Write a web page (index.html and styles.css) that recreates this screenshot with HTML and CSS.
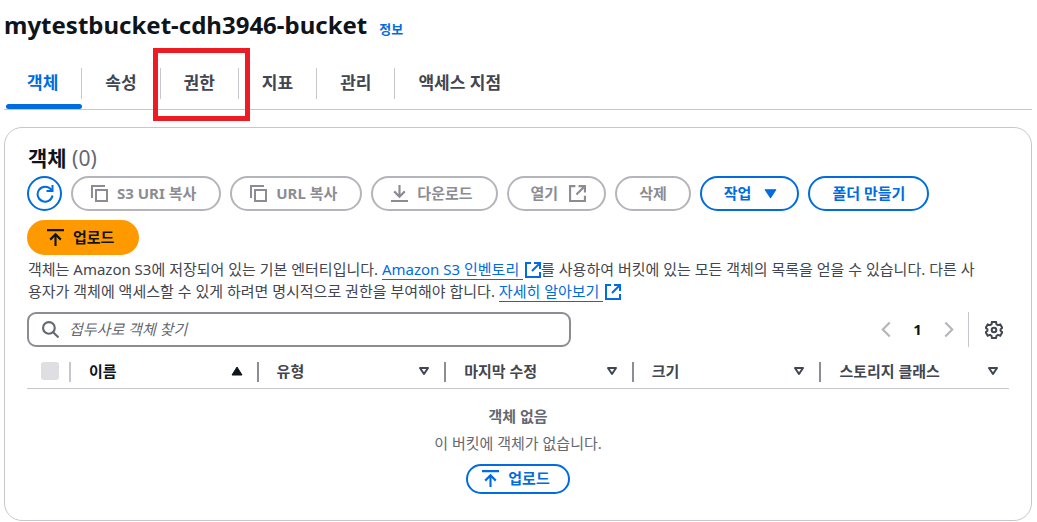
FILE: index.html
```html
<!DOCTYPE html>
<html lang="ko">
<head>
<meta charset="utf-8">
<title>mytestbucket-cdh3946-bucket</title>
<link rel="stylesheet" href="styles.css">
</head>
<body>
<svg class="defs" aria-hidden="true">
  <symbol id="copy" viewBox="0 0 17 17"><path d="M1 13V1h13M5 5h11v11H5z"/></symbol>
  <symbol id="upload" viewBox="0 0 16 16"><path d="M0 1h16M8 16V5.500M3 10l5-5 5 5"/></symbol>
  <symbol id="download" viewBox="0 0 16 16"><path d="M0 15h16M8 0v10.500M3 6l5 5 5-5"/></symbol>
  <symbol id="external" viewBox="0 0 16 16"><path d="M6 1H1v14h14v-5M9 1h6v6M15 1L7 9"/></symbol>
</svg>
<main class="page">
  <header class="title-row">
    <h1 class="title">mytestbucket-cdh3946-bucket</h1>
    <a class="info" href="#">정보</a>
  </header>
  <nav class="tabs">
    <button class="tab tab-active" type="button">객체</button>
    <button class="tab" type="button">속성</button>
    <button class="tab tab-marked" type="button">권한</button>
    <button class="tab" type="button">지표</button>
    <button class="tab" type="button">관리</button>
    <button class="tab" type="button">액세스 지점</button>
  </nav>
  <section class="panel">
    <h2 class="panel-title">객체 <span class="count">(0)</span></h2>
    <div class="actions">
      <button class="btn btn-round" type="button" aria-label="새로 고침"><svg class="icon icon-large" viewBox="0 0 18 18"><path d="M16.500 10.500a7.500 7.500 0 1 1-1.500-6l1.500 1.500M16.500 0v6h-6"/></svg></button>
      <button class="btn" type="button" disabled><svg class="icon"><use href="#copy"/></svg>S3 URI 복사</button>
      <button class="btn" type="button" disabled><svg class="icon"><use href="#copy"/></svg>URL 복사</button>
      <button class="btn" type="button" disabled><svg class="icon"><use href="#download"/></svg>다운로드</button>
      <button class="btn btn-trailing" type="button" disabled>열기<svg class="icon"><use href="#external"/></svg></button>
      <button class="btn btn-text" type="button" disabled>삭제</button>
      <button class="btn btn-trailing" type="button">작업<svg class="icon" viewBox="0 0 16 16"><path class="solid" d="M3 4.500h10L8 12z"/></svg></button>
      <button class="btn btn-text" type="button">폴더 만들기</button>
      <button class="btn btn-primary" type="button"><svg class="icon"><use href="#upload"/></svg>업로드</button>
    </div>
    <p class="description">객체는 Amazon S3에 저장되어 있는 기본 엔터티입니다. <a class="link" href="#"><span class="link-text">Amazon S3 인벤토리 </span><svg class="icon"><use href="#external"/></svg></a>를 사용하여 버킷에 있는 모든 객체의 목록을 얻을 수 있습니다. 다른 사용자가 객체에 액세스할 수 있게 하려면 명시적으로 권한을 부여해야 합니다. <a class="link" href="#"><span class="link-text">자세히 알아보기 </span><svg class="icon"><use href="#external"/></svg></a></p>
    <div class="tools">
      <label class="search">
        <svg class="icon" viewBox="0 0 16 16"><circle cx="6.500" cy="6.500" r="5.500"/><path d="M10.500 10.500l5 5"/></svg>
        <input class="search-input" type="text" placeholder="접두사로 객체 찾기" aria-label="접두사로 객체 찾기">
      </label>
      <div class="pager">
        <button class="page-step" type="button" aria-label="이전"><svg class="icon" viewBox="0 0 16 16"><path d="M12 1.500L5.500 8l6.500 6.500"/></svg></button>
        <button class="page-number" type="button">1</button>
        <button class="page-step" type="button" aria-label="다음"><svg class="icon" viewBox="0 0 16 16"><path d="M5 1.500L11.500 8 5 14.500"/></svg></button>
        <button class="settings" type="button" aria-label="기본 설정"><svg class="icon icon-large" viewBox="0 0 18 18"><path d="M7 1h4l.5 2.300 1.500.9 2.300-.8 2 3.500L15.600 8.300v1.400l1.700 1.500-2 3.500-2.300-.8-1.500.9L11 17H7l-.5-2.200-1.500-.9-2.300.8-2-3.500 1.700-1.500V8.300L.7 6.900l2-3.500 2.300.8 1.500-.9z"/><circle cx="9" cy="9" r="2.300"/></svg></button>
      </div>
    </div>
    <table class="table">
      <thead>
        <tr>
          <th class="select-cell"><input class="check" type="checkbox" aria-label="모두 선택" disabled></th>
          <th><span class="head head-sorted">이름<svg class="sort" viewBox="0 0 12 10"><path class="solid" d="M1 9L6 1l5 8z"/></svg></span></th>
          <th><span class="head">유형<svg class="sort" viewBox="0 0 12 10"><path d="M2 2h8L6 8z"/></svg></span></th>
          <th><span class="head">마지막 수정<svg class="sort" viewBox="0 0 12 10"><path d="M2 2h8L6 8z"/></svg></span></th>
          <th><span class="head">크기<svg class="sort" viewBox="0 0 12 10"><path d="M2 2h8L6 8z"/></svg></span></th>
          <th><span class="head">스토리지 클래스<svg class="sort" viewBox="0 0 12 10"><path d="M2 2h8L6 8z"/></svg></span></th>
        </tr>
      </thead>
      <tbody>
        <tr>
          <td class="empty" colspan="6">
            <strong class="empty-title">객체 없음</strong>
            <p class="empty-text">이 버킷에 객체가 없습니다.</p>
            <button class="btn btn-small" type="button"><svg class="icon"><use href="#upload"/></svg>업로드</button>
          </td>
        </tr>
      </tbody>
    </table>
  </section>
</main>
</body>
</html>
```
FILE: styles.css
```css
* {
  box-sizing: border-box;
}

body {
  margin: 0;
  background: #fff;
  color: #424650;
  font: 15px/22px "Noto Sans", "Noto Sans CJK KR", sans-serif;
}

button,
input {
  font: inherit;
}

button {
  padding: 0;
  border: 0;
  background: none;
  color: inherit;
}

.defs {
  display: none;
}

.page {
  padding: 8px 5px 0 4px;
}

.title-row {
  display: flex;
  align-items: baseline;
  gap: 12px;
}

.title {
  margin: 0;
  color: #0f141a;
  font-size: 24px;
  line-height: 34px;
  font-weight: 700;
}

.info {
  color: #006ce0;
  font-size: 13px;
  font-weight: 700;
  text-decoration: none;
}

.tabs {
  display: flex;
  margin-top: 15px;
  border-bottom: 1px solid #c6c6cd;
}

.tab {
  position: relative;
  height: 52px;
  padding: 0 24px 0 23px;
  font-size: 17px;
  line-height: 24px;
  font-weight: 700;
}

.tab:not(:last-child)::before {
  content: "";
  position: absolute;
  top: 11px;
  right: 0;
  width: 1px;
  height: 31px;
  background: #c6c6cd;
}

.tab-active {
  color: #006ce0;
}

.tab-active::after {
  content: "";
  position: absolute;
  right: 0;
  bottom: 0;
  left: 2px;
  height: 5px;
  border-radius: 3px;
  background: #006ce0;
}

.tab-marked::after {
  content: "";
  position: absolute;
  inset: -9px -11px -12px -8px;
  border: 5px solid #ed1c24;
}

.panel {
  margin-top: 17px;
  padding: 18px 22px 26px;
  border: 1px solid #c6c6cd;
  border-radius: 18px;
}

.panel-title {
  margin: 0 0 5px;
  padding-left: 1px;
  color: #0f141a;
  font-size: 21px;
  line-height: 25px;
  font-weight: 700;
}

.count {
  color: #656871;
  font-weight: 400;
}

.actions {
  display: flex;
  flex-wrap: wrap;
  gap: 9px;
}

.icon {
  flex: none;
  width: 17px;
  height: 17px;
  fill: none;
  stroke: currentColor;
  stroke-width: 2;
}

.icon-large {
  width: 18px;
  height: 18px;
}

.solid {
  fill: currentColor;
  stroke: currentColor;
  stroke-width: 1;
  stroke-linejoin: round;
}

.btn {
  display: inline-flex;
  align-items: center;
  justify-content: center;
  gap: 9px;
  height: 35px;
  padding: 0 23px 1px 18px;
  border: 2px solid #006ce0;
  border-radius: 18px;
  color: #006ce0;
  font-weight: 700;
}

.btn:disabled {
  border-color: #b4b4bb;
  color: #8c8c94;
}

.btn-round {
  width: 35px;
  padding: 0;
}

.btn-trailing {
  gap: 11px;
  padding: 0 18px 1px 22px;
}

.btn-text {
  padding: 0 22px 1px;
}

.btn-primary {
  border-color: #ff9900;
  background: #ff9900;
  color: #0f141a;
}

.btn-small {
  height: 30px;
  padding: 0 18px 1px 14px;
}

.description {
  margin: 3px 0 10px;
  padding: 0 24px 0 1px;
}

.link {
  color: #006ce0;
  text-decoration: none;
}

.link-text {
  border-bottom: 1px solid #006ce0;
}

.link .icon {
  width: 16px;
  height: 16px;
  margin-left: 2px;
  vertical-align: -3px;
}

.tools {
  display: flex;
  align-items: center;
  justify-content: space-between;
}

.search {
  display: flex;
  align-items: center;
  gap: 10px;
  flex: 0 1 544px;
  height: 35px;
  padding: 0 12px 0 13px;
  border: 2px solid #8c8c94;
  border-radius: 9px;
  color: #656871;
}

.search-input {
  flex: 1;
  min-width: 0;
  padding: 0 0 2px;
  border: 0;
  outline: 0;
  background: none;
}

.search-input::placeholder {
  color: #656871;
  font-style: italic;
}

.pager {
  display: flex;
  align-items: center;
}

.page-step {
  display: flex;
  color: #b4b4bb;
}

.page-number {
  width: 46px;
  padding: 0 0 2px 1px;
  color: #0f141a;
  font-weight: 700;
}

.settings {
  display: flex;
  align-items: center;
  height: 35px;
  margin-left: 11px;
  padding: 0 6px 0 16px;
  border-left: 1px solid #c6c6cd;
}

.table {
  width: 100%;
  margin-top: 7px;
  border-collapse: collapse;
  table-layout: fixed;
}

th {
  position: relative;
  height: 34px;
  padding: 0 10px 0 18px;
  border-bottom: 1px solid #c6c6cd;
  font-weight: 700;
  text-align: left;
}

th:not(:last-child)::after {
  content: "";
  position: absolute;
  top: 8px;
  right: 0;
  width: 2px;
  height: 20px;
  background: #8c8c94;
}

.select-cell {
  width: 44px;
  padding: 0 0 0 14px;
}

th.select-cell::after {
  background: #c6c6cd;
}

th:not(:last-child) {
  padding-right: 16px;
}

.check {
  display: block;
  width: 18px;
  height: 18px;
  margin: 0;
  appearance: none;
  border-radius: 3px;
  background: #dedee3;
}

.head {
  display: flex;
  align-items: center;
  justify-content: space-between;
}

.head-sorted {
  color: #0f141a;
}

.sort {
  width: 12px;
  height: 10px;
  fill: none;
  stroke: currentColor;
  stroke-width: 2;
  stroke-linejoin: round;
}

.empty {
  padding: 16px 0 0;
  color: #656871;
  text-align: center;
}

.empty-title {
  display: block;
}

.empty-text {
  margin: 5px 0 10px;
}
```
